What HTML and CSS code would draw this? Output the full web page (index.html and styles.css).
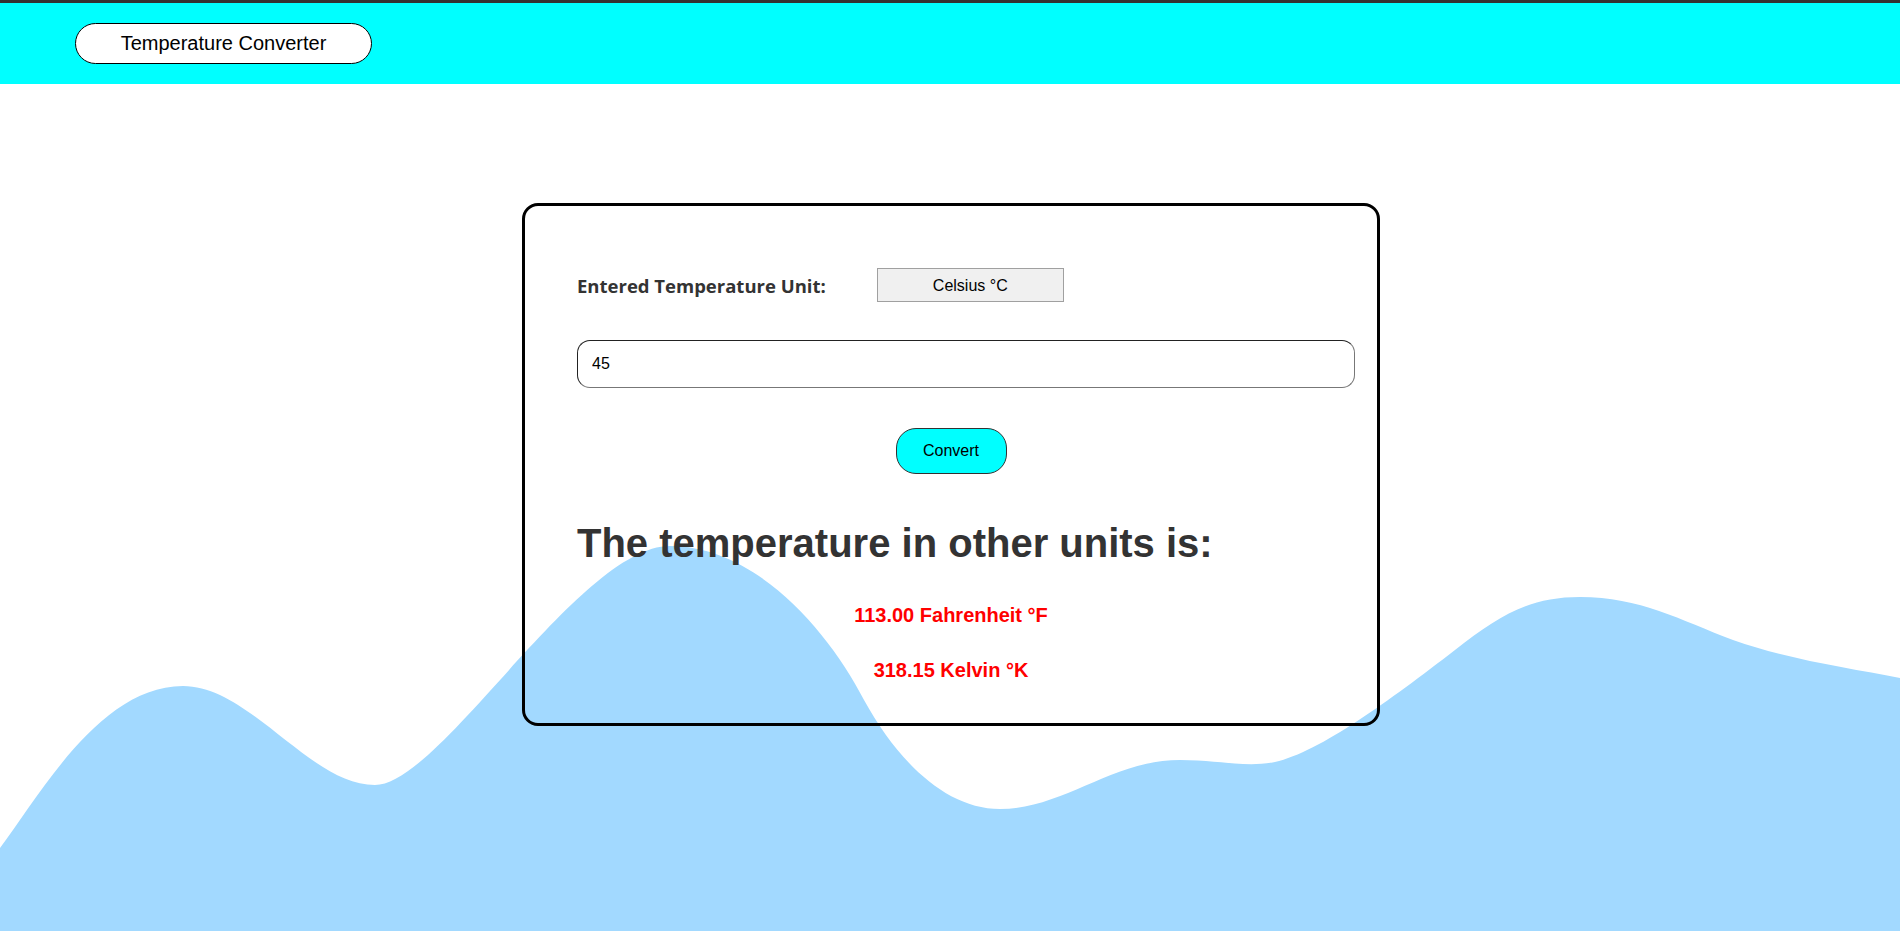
FILE: index.html
```html
<!DOCTYPE html>
<html lang="en">
<head>
<meta charset="utf-8">
<title>Temperature Converter</title>
<link rel="stylesheet" href="styles.css">
</head>
<body>
<div class="page">
  <svg class="wave" viewBox="0 0 1900 931" preserveAspectRatio="none" aria-hidden="true">
    <path d="M0,848 C40,795 100,686 183,686 C250,686 310,785 375,785 C440,785 580,546 670,546 C755,546 828,630 864,700 C897,760 945,809 1000,809 C1063,809 1112,760 1180,760 C1220,760 1245,768 1275,762 C1320,752 1390,700 1455,650 C1500,615 1530,597 1580,597 C1640,597 1680,620 1733,640 C1790,660 1850,668 1900,678 L1900,931 L0,931 Z" fill="#a2d9ff"/>
  </svg>
  <header class="topbar">
    <div class="brand">Temperature Converter</div>
  </header>
  <main class="main">
    <section class="card">
      <div class="unit-row">
        <label class="unit-label" for="unit">Entered Temperature Unit:</label>
        <select class="unit-select" id="unit">
          <option>Celsius °C</option>
          <option>Fahrenheit °F</option>
          <option>Kelvin °K</option>
        </select>
      </div>
      <input class="temp-input" type="text" value="45">
      <button class="convert-btn" type="button">Convert</button>
      <h2 class="result-title">The temperature in other units is:</h2>
      <p class="result result-first">113.00 Fahrenheit °F</p>
      <p class="result result-second">318.15 Kelvin °K</p>
    </section>
  </main>
</div>
</body>
</html>
```
FILE: styles.css
```css
* {
  box-sizing: border-box;
}

html, body {
  margin: 0;
  padding: 0;
  background: #ffffff;
}

body {
  font-family: "Liberation Sans", Arial, sans-serif;
  color: #000;
}

.page {
  position: relative;
  min-height: 100vh;
  overflow: hidden;
}

.wave {
  position: absolute;
  top: 0;
  left: 0;
  width: 100%;
  height: 100%;
  z-index: 0;
}

.topbar {
  position: relative;
  z-index: 1;
  height: 84px;
  border-top: 3px solid #333333;
  background: #00ffff;
  display: flex;
  align-items: center;
  padding-left: 75px;
}

.brand {
  width: 297px;
  height: 41px;
  border: 1px solid #000;
  border-radius: 21px;
  background: #ffffff;
  display: flex;
  align-items: center;
  justify-content: center;
  font-size: 20px;
  color: #000;
}

.main {
  position: relative;
  z-index: 1;
  display: flex;
  justify-content: center;
  padding: 119px 0 0 2px;
}

.card {
  width: 858px;
  border: 3px solid #000;
  border-radius: 16px;
  padding: 62px 0 41px;
  display: flex;
  flex-direction: column;
}

.unit-row {
  display: flex;
  align-items: center;
  gap: 51px;
  margin-left: 52px;
  height: 34px;
}

.unit-label {
  font-family: "Open Sans", "Noto Sans", sans-serif;
  font-weight: 700;
  font-size: 18.5px;
  color: #333333;
}

.unit-select {
  appearance: none;
  -webkit-appearance: none;
  width: 187px;
  height: 34px;
  border: 1px solid #a0a0a0;
  border-radius: 0;
  background: #f0f0f0;
  font-family: "Liberation Sans", Arial, sans-serif;
  font-size: 16px;
  color: #000;
  text-align: center;
  text-align-last: center;
  padding: 0;
}

.temp-input {
  margin: 38px 0 0 52px;
  width: 778px;
  height: 48px;
  border-style: solid;
  border-width: 1.5px;
  border-color: #222 #777 #777 #222;
  border-radius: 13px;
  padding: 0 14px;
  font-family: "Liberation Sans", Arial, sans-serif;
  font-size: 16px;
  color: #000;
  background: #fff;
  outline: none;
}

.convert-btn {
  align-self: center;
  margin-top: 40px;
  width: 111px;
  height: 46px;
  background: #00ffff;
  border: 1px solid #333;
  border-radius: 20px;
  font-family: "Liberation Sans", Arial, sans-serif;
  font-size: 16px;
  color: #000;
  padding: 0;
}

.result-title {
  margin: 46px 0 0 52px;
  font-size: 40px;
  line-height: 46px;
  font-weight: 700;
  color: #333333;
}

.result {
  margin: 0;
  text-align: center;
  font-size: 20px;
  line-height: 23px;
  font-weight: 700;
  color: #ff0000;
}

.result-first {
  margin-top: 38px;
}

.result-second {
  margin-top: 32px;
}
```
